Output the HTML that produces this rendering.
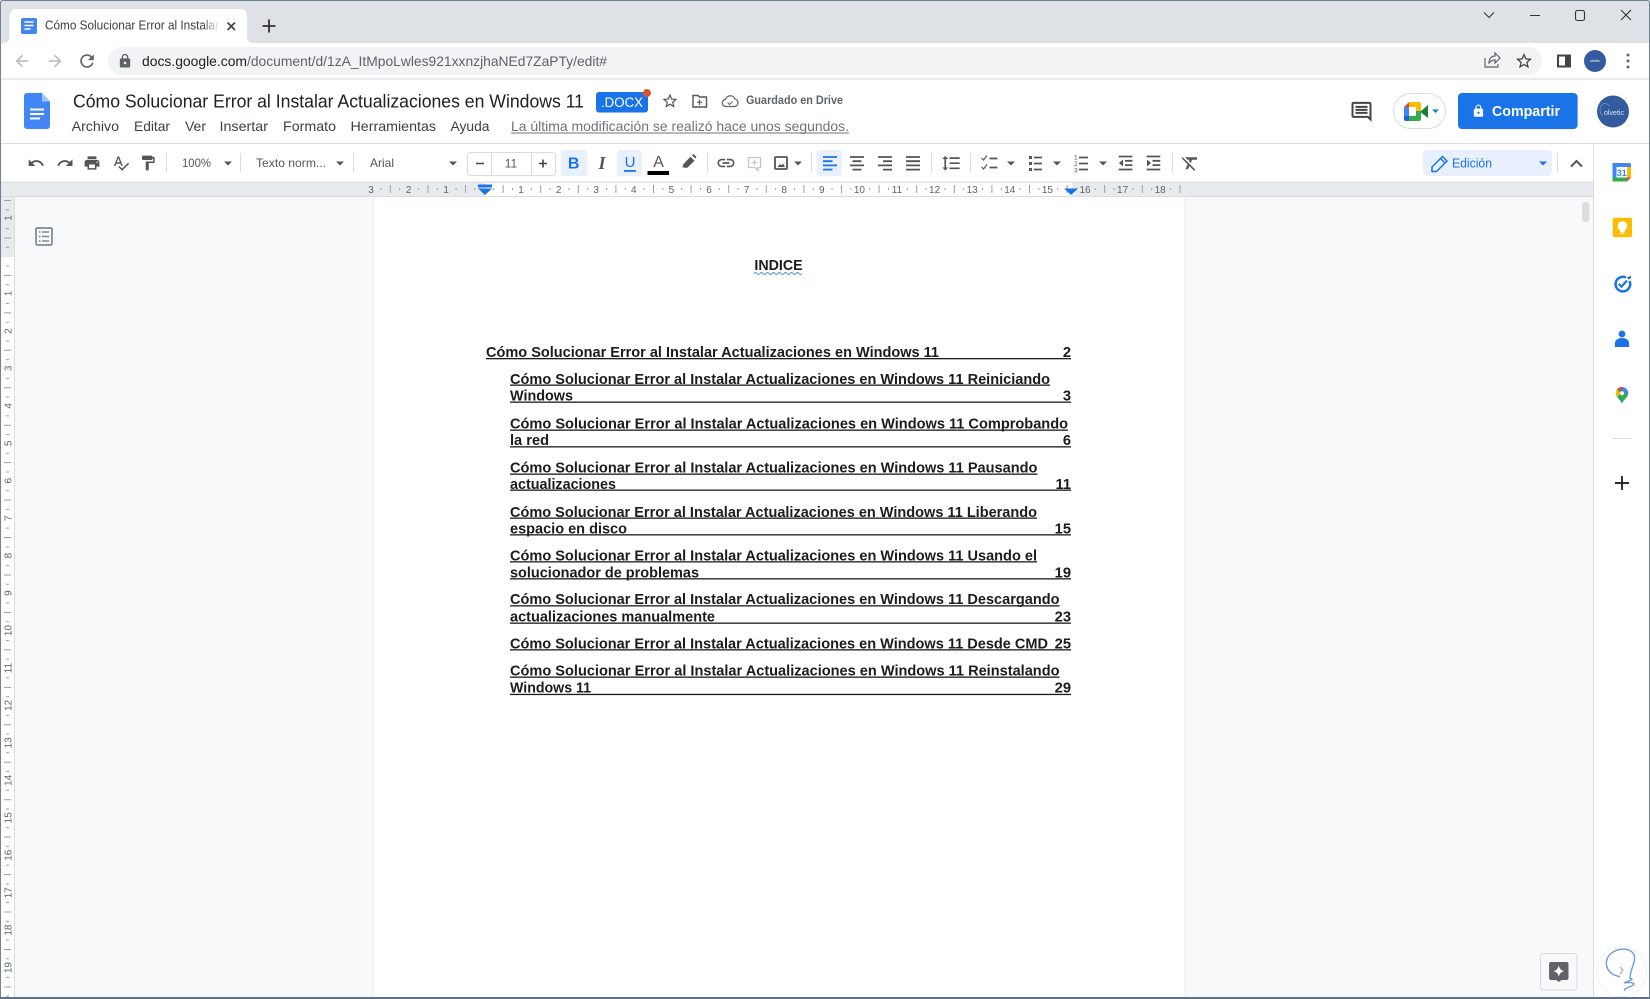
<!DOCTYPE html>
<html lang="es"><head><meta charset="utf-8"><title>Cómo Solucionar Error al Instalar Actualizaciones en Windows 11</title>
<style>
html,body{margin:0;padding:0;background:#fff;width:1650px;height:999px;overflow:hidden}
svg{display:block}
text{font-family:"Liberation Sans",Arial,sans-serif}
.d{font-size:14.7px;font-weight:bold;fill:#1c1c1c}
.m{font-size:14px;fill:#3c4043}
.t{font-size:12px;fill:#555}
.r{font-size:10px;fill:#5f6368;text-anchor:middle}
.i{fill:#555}
.s{fill:none;stroke:#555;stroke-width:1.8}
.b{fill:#1a73e8}
</style></head><body>
<svg width="1650" height="999" viewBox="0 0 1650 999" xmlns="http://www.w3.org/2000/svg">
<defs><linearGradient id="f" x1="0" x2="1" y1="0" y2="0"><stop offset="0" stop-color="#fff" stop-opacity="0"/><stop offset="1" stop-color="#fff"/></linearGradient></defs>
<rect width="1650" height="999" fill="#fff"/>
<!-- tab strip -->
<rect x="0" y="0" width="1650" height="43" fill="#dee1e6"/>
<path d="M2 43c5 0 7.500-2 7.500-6V16c0-4 3-7 7-7h224c4 0 6.500 3 6.500 7v21c0 4 3 6 7 6z" fill="#fff"/>
<rect x="21" y="18" width="16" height="16" rx="2" fill="#4285f4"/>
<path d="M24.500 22h9M24.500 25.500h9M24.500 29h6" stroke="#fff" stroke-width="1.500"/>
<text x="45" y="29.500" font-size="12.500" fill="#3c4043" textLength="174" lengthAdjust="spacingAndGlyphs">Cómo Solucionar Error al Instalar</text>
<rect x="203" y="15" width="16" height="22" fill="url(#f)"/>
<path d="M227.500 22.500l7.500 7.500m0-7.500l-7.500 7.500" stroke="#444" stroke-width="1.700"/>
<path d="M262.500 26h13M269 19.500v13" stroke="#333" stroke-width="1.800"/>
<!-- window controls -->
<path d="M1484 12.500l5 5 5-5M1530 15.500h10M1621 10l10 10m0-10l-10 10" stroke="#333" stroke-width="1.100" fill="none"/>
<rect x="1575.500" y="10.500" width="9" height="10" rx="2" fill="none" stroke="#333" stroke-width="1.100"/>
<!-- toolbar -->
<rect x="0" y="43" width="1650" height="35" fill="#fff"/>
<rect x="108" y="47" width="1434" height="28" rx="14" fill="#f1f3f4"/>
<g transform="translate(12.400 51.400) scale(.8)"><path fill="#b6babe" d="M20 11H7.830l5.590-5.590L12 4l-8 8 8 8 1.410-1.410L7.830 13H20v-2z"/></g>
<g transform="translate(64.600 70.600) scale(-.8)"><path fill="#b6babe" d="M20 11H7.830l5.590-5.590L12 4l-8 8 8 8 1.410-1.410L7.830 13H20v-2z"/></g>
<g transform="translate(76.800 50.800) scale(.85)"><path fill="#5f6368" d="M17.650 6.350C16.200 4.900 14.210 4 12 4c-4.420 0-7.990 3.580-7.990 8s3.570 8 7.990 8c3.730 0 6.840-2.550 7.730-6h-2.080c-.82 2.330-3.040 4-5.650 4-3.310 0-6-2.690-6-6s2.690-6 6-6c1.660 0 3.140.69 4.220 1.780L13 11h7V4l-2.350 2.350z"/></g>
<g transform="translate(117.200 53.200) scale(.65)"><path fill="#5f6368" d="M18 8h-1V6c0-2.760-2.240-5-5-5S7 3.240 7 6v2H6c-1.100 0-2 .9-2 2v10c0 1.100.9 2 2 2h12c1.100 0 2-.9 2-2V10c0-1.100-.9-2-2-2zm-6 9c-1.100 0-2-.9-2-2s.9-2 2-2 2 .9 2 2-.9 2-2 2zm3.100-9H8.900V6c0-1.710 1.390-3.100 3.100-3.100 1.710 0 3.100 1.390 3.100 3.100v2z"/></g>
<text x="142" y="66" font-size="14px" fill="#202124" textLength="105" lengthAdjust="spacingAndGlyphs">docs.google.com</text>
<text x="247" y="66" font-size="14px" fill="#5f6368" textLength="360" lengthAdjust="spacingAndGlyphs">/document/d/1zA_ItMpoLwles921xxnzjhaNEd7ZaPTy/edit#</text>
<path d="M1485 58v9h13v-3" fill="none" stroke="#5f6368" stroke-width="1.200"/>
<path d="M1489 63c0-5 3-7 6-7v-3l5 5-5 5v-3c-3 0-4 1-6 3z" fill="none" stroke="#5f6368" stroke-width="1.200"/>
<g transform="translate(1514.400 51.400) scale(.8)"><path fill="#444" d="M22 9.240l-7.190-.62L12 2 9.190 8.630 2 9.240l5.460 4.730L5.820 21 12 17.270 18.180 21l-1.630-7.030L22 9.240zM12 15.400l-3.760 2.270 1-4.280-3.320-2.880 4.380-.38L12 6.100l1.710 4.040 4.380.38-3.320 2.880 1 4.280L12 15.400z"/></g>
<rect x="1558" y="55.500" width="12" height="11" fill="none" stroke="#444" stroke-width="2"/><rect x="1565" y="55" width="5.500" height="12" fill="#444"/>
<circle cx="1595" cy="61" r="11" fill="#335b9e"/><text x="1595" y="62" font-size="3.500px" fill="#fff" text-anchor="middle">olvetic</text>
<circle cx="1628" cy="55" r="1.500" fill="#666"/><circle cx="1628" cy="61" r="1.500" fill="#666"/><circle cx="1628" cy="67" r="1.500" fill="#666"/>
<rect x="0" y="78" width="1650" height="2" fill="#e8eaed"/>
<!-- docs header -->
<path d="M27 93h15l8 8.500V126a3 3 0 0 1-3 3H27a3 3 0 0 1-3-3V96a3 3 0 0 1 3-3z" fill="#4285f4"/>
<path d="M42 93l8 8.500h-8z" fill="#a1c2fa"/>
<path d="M30 109.500h14M30 114h14M30 118.500h10" stroke="#fff" stroke-width="2"/>
<text x="73" y="107.500" font-size="18.800px" fill="#202124" textLength="511" lengthAdjust="spacingAndGlyphs">Cómo Solucionar Error al Instalar Actualizaciones en Windows 11</text>
<rect x="596" y="92" width="52" height="20.500" rx="3" fill="#1a73e8"/>
<text x="601" y="107" font-size="13.500px" fill="#fff" textLength="42" lengthAdjust="spacingAndGlyphs">.DOCX</text>
<circle cx="647" cy="93" r="4" fill="#d9562c"/>
<g transform="translate(661 92) scale(.75)"><path fill="#555" d="M22 9.240l-7.190-.62L12 2 9.190 8.630 2 9.240l5.460 4.730L5.820 21 12 17.270 18.180 21l-1.630-7.030L22 9.240zM12 15.400l-3.760 2.270 1-4.280-3.320-2.880 4.380-.38L12 6.100l1.710 4.040 4.380.38-3.320 2.880 1 4.280L12 15.400z"/></g>
<path d="M693 95.500h5l1.500 1.500h7v10h-13.500z" fill="none" stroke="#555" stroke-width="1.400"/><path d="M699.500 99.500v5.500M697 102.200h5" stroke="#555" stroke-width="1.200"/>
<path d="M726 106.500a3.500 3.500 0 0 1-.5-7 5 5 0 0 1 9.500-.5 3.800 3.800 0 0 1-.5 7.500z" fill="none" stroke="#666" stroke-width="1.300"/><path d="M727.500 102.500l2 2 3-3" fill="none" stroke="#666" stroke-width="1.100"/>
<text x="746" y="104" font-size="11.500px" font-weight="bold" fill="#5f6368" textLength="97" lengthAdjust="spacingAndGlyphs">Guardado en Drive</text>
<text class="m" x="71.600" y="131" textLength="47.400" lengthAdjust="spacingAndGlyphs">Archivo</text>
<text class="m" x="134" y="131" textLength="36" lengthAdjust="spacingAndGlyphs">Editar</text>
<text class="m" x="185" y="131" textLength="21" lengthAdjust="spacingAndGlyphs">Ver</text>
<text class="m" x="219.500" y="131" textLength="48.500" lengthAdjust="spacingAndGlyphs">Insertar</text>
<text class="m" x="283" y="131" textLength="53" lengthAdjust="spacingAndGlyphs">Formato</text>
<text class="m" x="350.500" y="131" textLength="85.500" lengthAdjust="spacingAndGlyphs">Herramientas</text>
<text class="m" x="450.500" y="131" textLength="39" lengthAdjust="spacingAndGlyphs">Ayuda</text>
<text x="511" y="131" font-size="14px" fill="#6f7377" textLength="338" lengthAdjust="spacingAndGlyphs">La última modificación se realizó hace unos segundos.</text>
<rect x="511" y="132.500" width="338" height="1" fill="#6f7377"/>
<g transform="translate(1349.500 99.900) scale(1)"><path fill="#444" d="M21.990 4c0-1.100-.89-2-1.990-2H4c-1.100 0-2 .9-2 2v12c0 1.100.9 2 2 2h14l4 4-.01-18zM20 4v13.170L18.830 16H4V4h16zM6 12h12v2H6zm0-3h12v2H6zm0-3h12v2H6z"/></g>
<rect x="1393.500" y="93.500" width="52" height="35" rx="17.500" fill="#fff" stroke="#dadce0"/>
<path d="M1404 107l5-5v5z" fill="#ea4335"/>
<path d="M1409 102h10a2 2 0 0 1 2 2v7h-5v-4h-7z" fill="#fbbc04"/>
<rect x="1404" y="107" width="5" height="9" fill="#4285f4"/>
<path d="M1404 116h5v5h-3a2 2 0 0 1-2-2z" fill="#1967d2"/>
<path d="M1409 116h7v-5h5v8a2 2 0 0 1-2 2h-10z" fill="#34a853"/>
<path d="M1421 111l7-6v13l-7-5.500z" fill="#188038"/>
<path d="M1432 109.500h7l-3.500 3.500z" fill="#1a73e8"/>
<rect x="1458" y="93" width="119.600" height="36" rx="4" fill="#1a73e8"/>
<g transform="translate(1471.500 104) scale(.58)"><path fill="#fff" d="M18 8h-1V6c0-2.760-2.240-5-5-5S7 3.240 7 6v2H6c-1.100 0-2 .9-2 2v10c0 1.100.9 2 2 2h12c1.100 0 2-.9 2-2V10c0-1.100-.9-2-2-2zm-6 9c-1.100 0-2-.9-2-2s.9-2 2-2 2 .9 2 2-.9 2-2 2zm3.100-9H8.900V6c0-1.710 1.390-3.100 3.100-3.100 1.710 0 3.100 1.390 3.100 3.100v2z"/></g>
<text x="1492" y="116" font-size="14.500px" font-weight="bold" fill="#fff" textLength="68" lengthAdjust="spacingAndGlyphs">Compartir</text>
<circle cx="1613" cy="111.500" r="16" fill="#335b9e"/>
<text x="1604" y="115" font-size="7px" fill="#dfe6f2" textLength="20" lengthAdjust="spacingAndGlyphs">olvetic</text>
<path d="M1603 116c-4-3-4-9 0-12 3-1 5 0 6 2" fill="none" stroke="#8aa3cc" stroke-width=".6"/>
<rect x="0" y="143" width="1650" height="1" fill="#dadce0"/>
<!-- formatting toolbar -->
<g class="i">
<g transform="translate(27.200 154.200) scale(.74)"><path d="M12.500 8c-2.650 0-5.050.99-6.900 2.600L2 7v9h9l-3.620-3.620c1.390-1.160 3.160-1.880 5.120-1.880 3.540 0 6.550 2.310 7.600 5.500l2.370-.78C21.080 11.030 17.150 8 12.500 8z"/></g>
<g transform="translate(56.200 154.200) scale(.74)"><path d="M18.400 10.600C16.550 8.990 14.150 8 11.500 8c-4.650 0-8.580 3.030-9.960 7.220L3.900 16c1.050-3.190 4.050-5.500 7.600-5.500 1.950 0 3.730.72 5.120 1.880L13 16h9V7l-3.600 3.600z"/></g>
<g transform="translate(83.100 154.100) scale(.74)"><path d="M19 8H5c-1.660 0-3 1.340-3 3v6h4v4h12v-4h4v-6c0-1.660-1.340-3-3-3zm-3 11H8v-5h8v5zm3-7c-.55 0-1-.45-1-1s.45-1 1-1 1 .45 1 1-.45 1-1 1zm-1-9H6v4h12V3z"/></g>
<g transform="translate(112.100 154.100) scale(.74)"><path d="M12.450 16h2.090L9.430 3H7.570L2.460 16h2.090l1.120-3h5.640l1.140 3zm-6.020-5L8.500 5.480 10.570 11H6.430zm15.160.59l-8.090 8.090L9.830 16l-1.410 1.410 5.090 5.090L23 13l-1.410-1.410z"/></g>
<g transform="translate(139.100 154.100) scale(.74)"><path d="M18 4V3c0-.55-.45-1-1-1H5c-.55 0-1 .45-1 1v4c0 .55.45 1 1 1h12c.55 0 1-.45 1-1V6h1v4H9v11c0 .55.45 1 1 1h2c.55 0 1-.45 1-1v-9h8V4h-3z"/></g>
<path d="M224 161.500h8l-4 4zM336 161.500h8l-4 4zM449 161.500h8l-4 4zM794 161.500h8l-4 4zM1007 161.500h8l-4 4zM1053 161.500h8l-4 4zM1099 161.500h8l-4 4z"/>
</g>
<g fill="#dadce0"><rect x="166" y="153" width="1" height="20"/><rect x="240" y="153" width="1" height="20"/><rect x="353" y="153" width="1" height="20"/><rect x="707" y="153" width="1" height="20"/><rect x="811" y="153" width="1" height="20"/><rect x="931" y="153" width="1" height="20"/><rect x="970" y="153" width="1" height="20"/><rect x="1172" y="153" width="1" height="20"/><rect x="1557" y="153" width="1" height="20"/></g>
<text class="t" x="182" y="167" textLength="29" lengthAdjust="spacingAndGlyphs">100%</text>
<text class="t" x="256" y="167" textLength="70" lengthAdjust="spacingAndGlyphs">Texto norm...</text>
<text class="t" x="370" y="167" textLength="24" lengthAdjust="spacingAndGlyphs">Arial</text>
<rect x="467.500" y="152.500" width="88" height="23" rx="3" fill="#fff" stroke="#dadce0"/>
<path d="M491.500 153v22M531.500 153v22" stroke="#dadce0"/>
<path d="M476 163.500h8M539 163.500h8M543 159.500v8" stroke="#444" stroke-width="1.600"/>
<text class="t" x="511" y="167.500" text-anchor="middle">11</text>
<rect x="561" y="150" width="26" height="26" rx="3" fill="#e8f0fe"/>
<text x="573.600" y="168.500" font-size="16px" font-weight="bold" fill="#1a73e8" text-anchor="middle">B</text>
<text x="602" y="169" font-size="18px" font-weight="bold" font-style="italic" fill="#555" text-anchor="middle" style="font-family:'Liberation Serif',serif">I</text>
<rect x="617" y="150" width="25" height="26" rx="3" fill="#e8f0fe"/>
<text x="630" y="167" font-size="15px" fill="#1a73e8" text-anchor="middle">U</text>
<rect x="624" y="170" width="12" height="1.800" fill="#1a73e8"/>
<text x="658.600" y="167" font-size="16px" fill="#555" text-anchor="middle">A</text>
<rect x="647.500" y="171" width="21.500" height="4" fill="#000"/>
<path class="i" d="M682.500 167.500l1-3.500 7-7.200 4 4-7.200 7zM692 155.300l1.500-1.300 3 3-1.300 1.500z"/>
<g transform="translate(715.800 152.800) scale(.85)"><path class="i" d="M3.900 12c0-1.710 1.390-3.100 3.100-3.100h4V7H7c-2.760 0-5 2.240-5 5s2.240 5 5 5h4v-1.900H7c-1.710 0-3.100-1.390-3.100-3.100zM8 13h8v-2H8v2zm9-6h-4v1.900h4c1.710 0 3.100 1.390 3.100 3.100s-1.390 3.100-3.100 3.100h-4V17h4c2.760 0 5-2.240 5-5s-2.240-5-5-5z"/></g>
<path d="M748.500 157.500h12v10h-2.500v3l-3-3h-6.500z" fill="none" stroke="#c4c7c5" stroke-width="1.300"/><path d="M754.500 159.500v6M751.500 162.500h6" stroke="#c4c7c5" stroke-width="1.200"/>
<rect x="775" y="157" width="12" height="12" rx="1" class="s"/><path class="i" d="M777.500 167l2.500-3 1.500 1.500 1.500-2 2 3.500z"/>
<rect x="816.500" y="150" width="25.500" height="26" rx="3" fill="#e8f0fe"/>
<path d="M823 157h14M823 161.200h9.500M823 165.400h14M823 169.600h9.500" stroke="#1a73e8" stroke-width="1.800"/>
<path d="M850 157h14M852.500 161.200h9M850 165.400h14M852.500 169.600h9" class="s"/>
<path d="M878 157h14M883 161.200h9M878 165.400h14M883 169.600h9" class="s"/>
<path d="M906 157h14M906 161.200h14M906 165.400h14M906 169.600h14" class="s"/>
<g transform="translate(941 153) scale(.85)"><path class="i" d="M6 7h2.500L5 3.500 1.500 7H4v10H1.500L5 20.500 8.500 17H6V7zm4-2v2h12V5H10zm0 14h12v-2H10v2zm0-6h12v-2H10v2z"/></g>
<path d="M981.500 158l2 2 3.500-4.500M981.500 167l2 2 3.500-4.500" fill="none" stroke="#555" stroke-width="1.200"/>
<path d="M989.500 158.500h8M989.500 167.500h8" class="s"/>
<g class="i"><rect x="1029" y="156" width="3" height="3"/><rect x="1029" y="162" width="3" height="3"/><rect x="1029" y="168" width="3" height="3"/></g>
<path d="M1034 157.500h8M1034 163.500h8M1034 169.500h8" class="s"/>
<text x="1074" y="159.500" font-size="6.500px" fill="#555">1</text><text x="1074" y="166" font-size="6.500px" fill="#555">2</text><text x="1074" y="172.500" font-size="6.500px" fill="#555">3</text>
<path d="M1079 157.500h9M1079 163.500h9M1079 169.500h9" class="s"/>
<path d="M1118.700 156.500h13.700M1125 160.800h7.400M1125 165.100h7.400M1118.700 169.500h13.700" class="s"/><path class="i" d="M1123 159.500v7l-4-3.500z"/>
<path d="M1146.600 156.500h13.700M1152.500 160.800h7.800M1152.500 165.100h7.800M1146.600 169.500h13.700" class="s"/><path class="i" d="M1147 159.500v7l4-3.500z"/>
<g transform="translate(1180 153) scale(.85)"><path class="i" d="M3.270 5L2 6.270l6.970 6.970L6.500 19h3l1.570-3.660L16.730 21 18 19.730 3.550 5.270 3.270 5zM6 5v.18L8.820 8h2.400l-.72 1.680 2.100 2.100L14.210 8H20V5H6z"/></g>
<rect x="1423" y="150" width="129" height="26" rx="4" fill="#e8f0fe"/>
<path d="M1432 171.500v-4.500l10.500-10.500 4.500 4.500-10.500 10.500zM1440.500 158.500l4.500 4.500" fill="none" stroke="#1a73e8" stroke-width="1.500"/>
<text x="1452" y="167.500" font-size="13px" fill="#1a73e8" textLength="40" lengthAdjust="spacingAndGlyphs">Edición</text>
<path class="b" d="M1539 161.500h8l-4 4z"/>
<path d="M1571 166.500l5.500-5.500 5.500 5.500" fill="none" stroke="#555" stroke-width="2"/>
<!-- canvas -->
<rect x="1" y="197" width="1593" height="802" fill="#f8f9fa"/>
<rect x="373" y="197" width="812" height="802" fill="#fff"/>
<path d="M373 197v802M1185 197v802" stroke="#e8eaed"/>
<!-- horizontal ruler -->
<rect x="1" y="182" width="1593" height="15" fill="#e8eaed"/>
<rect x="485" y="183" width="587" height="13" fill="#fff"/>
<path d="M0 182h1594M0 196.500h1594" stroke="#dadce0"/>
<path d="M380.400 189H1180" stroke="#9aa0a6" stroke-width="2" stroke-dasharray="1 17.800"/>
<path d="M389.800 189H1181" stroke="#9aa0a6" stroke-width="8" stroke-dasharray="1 36.600"/>
<g class="r">
<text class="r" x="371" y="193">3</text><text class="r" x="408.600" y="193">2</text><text class="r" x="446.200" y="193">1</text>
<text class="r" x="521" y="193">1</text><text class="r" x="558.600" y="193">2</text><text class="r" x="596.200" y="193">3</text><text class="r" x="633.800" y="193">4</text><text class="r" x="671.400" y="193">5</text><text class="r" x="709" y="193">6</text><text class="r" x="746.600" y="193">7</text><text class="r" x="784.200" y="193">8</text><text class="r" x="821.800" y="193">9</text><text class="r" x="859.400" y="193">10</text><text class="r" x="897" y="193">11</text><text class="r" x="934.600" y="193">12</text><text class="r" x="972.200" y="193">13</text><text class="r" x="1009.800" y="193">14</text><text class="r" x="1047.400" y="193">15</text><text class="r" x="1085" y="193">16</text><text class="r" x="1122.600" y="193">17</text><text class="r" x="1160.200" y="193">18</text>
</g>
<rect x="478" y="184.500" width="14" height="3" fill="#1a73e8"/><path class="b" d="M478 188.500h14l-7 6.500z"/>
<path class="b" d="M1064 188.500h14l-7 6.500z"/>
<!-- vertical ruler -->
<rect x="1" y="197" width="13.500" height="802" fill="#fff"/>
<rect x="1" y="197" width="13.500" height="60" fill="#e8eaed"/>
<path d="M14.500 197v802" stroke="#dadce0"/>
<path d="M7.500 209.400V999" stroke="#9aa0a6" stroke-width="3" stroke-dasharray="1 17.720"/>
<path d="M7.500 200V999" stroke="#9aa0a6" stroke-width="7" stroke-dasharray="1 36.450"/>
<g transform="translate(11.500 218) rotate(-90)"><text class="r">1</text></g>
<g transform="translate(11.500 293.500) rotate(-90)"><text class="r">1</text></g>
<g transform="translate(11.500 331) rotate(-90)"><text class="r">2</text></g>
<g transform="translate(11.500 368.400) rotate(-90)"><text class="r">3</text></g>
<g transform="translate(11.500 405.800) rotate(-90)"><text class="r">4</text></g>
<g transform="translate(11.500 443.300) rotate(-90)"><text class="r">5</text></g>
<g transform="translate(11.500 480.700) rotate(-90)"><text class="r">6</text></g>
<g transform="translate(11.500 518.200) rotate(-90)"><text class="r">7</text></g>
<g transform="translate(11.500 555.600) rotate(-90)"><text class="r">8</text></g>
<g transform="translate(11.500 593.100) rotate(-90)"><text class="r">9</text></g>
<g transform="translate(11.500 630.500) rotate(-90)"><text class="r">10</text></g>
<g transform="translate(11.500 668) rotate(-90)"><text class="r">11</text></g>
<g transform="translate(11.500 705.400) rotate(-90)"><text class="r">12</text></g>
<g transform="translate(11.500 742.900) rotate(-90)"><text class="r">13</text></g>
<g transform="translate(11.500 780.300) rotate(-90)"><text class="r">14</text></g>
<g transform="translate(11.500 817.800) rotate(-90)"><text class="r">15</text></g>
<g transform="translate(11.500 855.200) rotate(-90)"><text class="r">16</text></g>
<g transform="translate(11.500 892.700) rotate(-90)"><text class="r">17</text></g>
<g transform="translate(11.500 930.100) rotate(-90)"><text class="r">18</text></g>
<g transform="translate(11.500 967.600) rotate(-90)"><text class="r">19</text></g>
<!-- outline icon -->
<rect x="36" y="228" width="16" height="17" rx="1.500" fill="none" stroke="#7f8a94" stroke-width="1.700"/>
<path d="M39 232h1.500M42 232h7M39 236.500h1.500M42 236.500h7M39 241h1.500M42 241h7" stroke="#7f8a94" stroke-width="1.400"/>
<!-- document -->
<text class="d" x="754.400" y="270" textLength="48.200" lengthAdjust="spacingAndGlyphs">INDICE</text>
<path d="M754 273.500q1.500-2 3 0t3 0 3 0 3 0 3 0 3 0 3 0 3 0 3 0 3 0 3 0 3 0 3 0 3 0 3 0 3 0" fill="none" stroke="#4a90e2" stroke-width="1"/>
<text class="d" x="486" y="357" textLength="453" lengthAdjust="spacingAndGlyphs">Cómo Solucionar Error al Instalar Actualizaciones en Windows 11</text>
<text class="d" x="1071" y="357" text-anchor="end">2</text>
<text class="d" x="510" y="384" textLength="540" lengthAdjust="spacingAndGlyphs">Cómo Solucionar Error al Instalar Actualizaciones en Windows 11 Reiniciando</text>
<text class="d" x="510" y="400.300" textLength="63" lengthAdjust="spacingAndGlyphs">Windows</text>
<text class="d" x="1071" y="400.300" text-anchor="end">3</text>
<text class="d" x="510" y="428.500" textLength="558" lengthAdjust="spacingAndGlyphs">Cómo Solucionar Error al Instalar Actualizaciones en Windows 11 Comprobando</text>
<text class="d" x="510" y="445.200" textLength="39" lengthAdjust="spacingAndGlyphs">la red</text>
<text class="d" x="1071" y="445.200" text-anchor="end">6</text>
<text class="d" x="510" y="472.500" textLength="527.400" lengthAdjust="spacingAndGlyphs">Cómo Solucionar Error al Instalar Actualizaciones en Windows 11 Pausando</text>
<text class="d" x="510" y="489" textLength="106" lengthAdjust="spacingAndGlyphs">actualizaciones</text>
<text class="d" x="1071" y="489" text-anchor="end">11</text>
<text class="d" x="510" y="517" textLength="527" lengthAdjust="spacingAndGlyphs">Cómo Solucionar Error al Instalar Actualizaciones en Windows 11 Liberando</text>
<text class="d" x="510" y="533.700" textLength="117" lengthAdjust="spacingAndGlyphs">espacio en disco</text>
<text class="d" x="1071" y="533.700" text-anchor="end">15</text>
<text class="d" x="510" y="560.700" textLength="527" lengthAdjust="spacingAndGlyphs">Cómo Solucionar Error al Instalar Actualizaciones en Windows 11 Usando el</text>
<text class="d" x="510" y="577.700" textLength="189" lengthAdjust="spacingAndGlyphs">solucionador de problemas</text>
<text class="d" x="1071" y="577.700" text-anchor="end">19</text>
<text class="d" x="510" y="604.200" textLength="549.500" lengthAdjust="spacingAndGlyphs">Cómo Solucionar Error al Instalar Actualizaciones en Windows 11 Descargando</text>
<text class="d" x="510" y="621.500" textLength="205" lengthAdjust="spacingAndGlyphs">actualizaciones manualmente</text>
<text class="d" x="1071" y="621.500" text-anchor="end">23</text>
<text class="d" x="510" y="648.700" textLength="538" lengthAdjust="spacingAndGlyphs">Cómo Solucionar Error al Instalar Actualizaciones en Windows 11 Desde CMD</text>
<text class="d" x="1071" y="648.700" text-anchor="end">25</text>
<text class="d" x="510" y="675.500" textLength="549.500" lengthAdjust="spacingAndGlyphs">Cómo Solucionar Error al Instalar Actualizaciones en Windows 11 Reinstalando</text>
<text class="d" x="510" y="692.500" textLength="81" lengthAdjust="spacingAndGlyphs">Windows 11</text>
<text class="d" x="1071" y="692.500" text-anchor="end">29</text>
<g fill="#1c1c1c">
<rect x="486" y="358" width="585" height="1.300"/>
<rect x="510" y="384.500" width="540" height="1.300"/><rect x="510" y="401.500" width="561" height="1.300"/>
<rect x="510" y="429.500" width="558" height="1.300"/><rect x="510" y="446.200" width="561" height="1.300"/>
<rect x="510" y="473.500" width="527.400" height="1.300"/><rect x="510" y="489.500" width="561" height="1.300"/>
<rect x="510" y="517.500" width="527" height="1.300"/><rect x="510" y="534.200" width="561" height="1.300"/>
<rect x="510" y="561.200" width="527" height="1.300"/><rect x="510" y="578.200" width="561" height="1.300"/>
<rect x="510" y="605.200" width="549.500" height="1.300"/><rect x="510" y="622.500" width="561" height="1.300"/>
<rect x="510" y="649.200" width="561" height="1.300"/>
<rect x="510" y="676.500" width="549.500" height="1.300"/><rect x="510" y="693.800" width="561" height="1.300"/>
</g>
<!-- scrollbar -->
<rect x="1582" y="202" width="7.500" height="20" rx="3.500" fill="#dadce0"/>
<!-- side panel -->
<rect x="1594" y="144" width="55" height="855" fill="#fff"/>
<path d="M1593.500 144v855" stroke="#dadce0"/>
<rect x="1612.500" y="163" width="18.500" height="18.500" rx="1.500" fill="#fff"/>
<path d="M1614 163h15.500a1.500 1.500 0 0 1 1.500 1.500v2.500h-18.500v-2.500a1.500 1.500 0 0 1 1.500-1.500z" fill="#4285f4"/>
<rect x="1612.500" y="163" width="4" height="18.500" fill="#4285f4"/>
<rect x="1627" y="167" width="4" height="10.500" fill="#fbbc04"/>
<rect x="1612.500" y="177.500" width="14.500" height="4" fill="#34a853"/>
<path d="M1627 177.500h4l-4 4z" fill="#ea4335"/>
<text x="1621.700" y="176" font-size="9px" font-weight="bold" fill="#4285f4" text-anchor="middle">31</text>
<rect x="1612.700" y="217.700" width="19.300" height="19.600" rx="2" fill="#fbbc04"/>
<circle cx="1622.400" cy="226" r="4.800" fill="#fff"/><rect x="1620" y="229" width="4.800" height="3" fill="#fff"/><rect x="1620.500" y="232.500" width="3.800" height="1.500" fill="#fff"/>
<path d="M1629.500 281a7.300 7.300 0 1 1-3.500-3.500" fill="none" stroke="#1a73e8" stroke-width="2.500"/>
<path d="M1618.800 284l2.700 2.700 5.500-6.200" fill="none" stroke="#1a73e8" stroke-width="2.200"/>
<path d="M1627 277.500l3.500-1.500.8 1.500-2.500 2z" fill="#185abc"/>
<circle cx="1622" cy="334" r="3.400" fill="#1a73e8"/>
<path d="M1615 347v-4c0-3 3-5 7-5s7 2 7 5v4z" fill="#1a73e8"/>
<path d="M1622 387a6.200 6.200 0 0 1 6.200 6.200c0 3.800-4 6-6.200 10-2.200-4-6.200-6.200-6.200-10a6.200 6.200 0 0 1 6.200-6.200z" fill="#34a853"/>
<path d="M1617 389.500a6.200 6.200 0 0 1 5-2.500v4z" fill="#ea4335"/>
<path d="M1622 387a6.200 6.200 0 0 1 6.200 6.200l-4 .5a2.200 2.200 0 0 0-2.200-2.700z" fill="#4285f4"/>
<path d="M1616 393.200a6 6 0 0 1 1-3.700l3.500 3.500-3 3.800c-1-1-1.500-2.300-1.500-3.600z" fill="#fbbc04"/>
<circle cx="1622" cy="393.200" r="2" fill="#fff"/>
<rect x="1612" y="438" width="20" height="1" fill="#dadce0"/>
<path d="M1615 483h14M1622 476v14" stroke="#111" stroke-width="1.700"/>
<!-- explore button -->
<rect x="1540.500" y="953.500" width="36.500" height="36.500" rx="3" fill="#f8f9fa" stroke="#dadce0"/>
<path d="M1551 962h15.500a2 2 0 0 1 2 2v14a2 2 0 0 1-2 2h-5l-2.700 2-2.700-2h-5a2 2 0 0 1-2-2v-14a2 2 0 0 1 2-2z" fill="#5f6368"/>
<path d="M1558.800 965.500q1 5 5.500 5.500-4.500 1-5.500 5.500-1-4.500-5.500-5.500 4.500-.5 5.500-5.500z" fill="#fff"/>
<!-- watermark -->
<circle cx="1621.700" cy="971.700" r="25" fill="#fff" stroke="#eef1f4"/>
<path d="M1620 976.700C1610 975 1605 968.300 1606.700 960 1610 948.300 1630 945 1634 955 1636.700 961.700 1630 968.300 1630 978.300c6 1-3 3-6 4.500 10-1 12 1 8 3-6 3-9 3-7 5" fill="none" stroke="#6f9bd8" stroke-width="1.400"/>
<path d="M1620 967l3 3-3 4" fill="none" stroke="#a8a8a8" stroke-width="1.200"/>
<!-- window frame -->
<path d="M.5 999V3a2.500 2.500 0 0 1 2.500-2.500h1644a2.500 2.500 0 0 1 2.500 2.500v996" fill="none" stroke="#6f8296"/>
<rect x="0" y="997" width="1650" height="2" fill="#5f7286"/>
</svg>
</body></html>
